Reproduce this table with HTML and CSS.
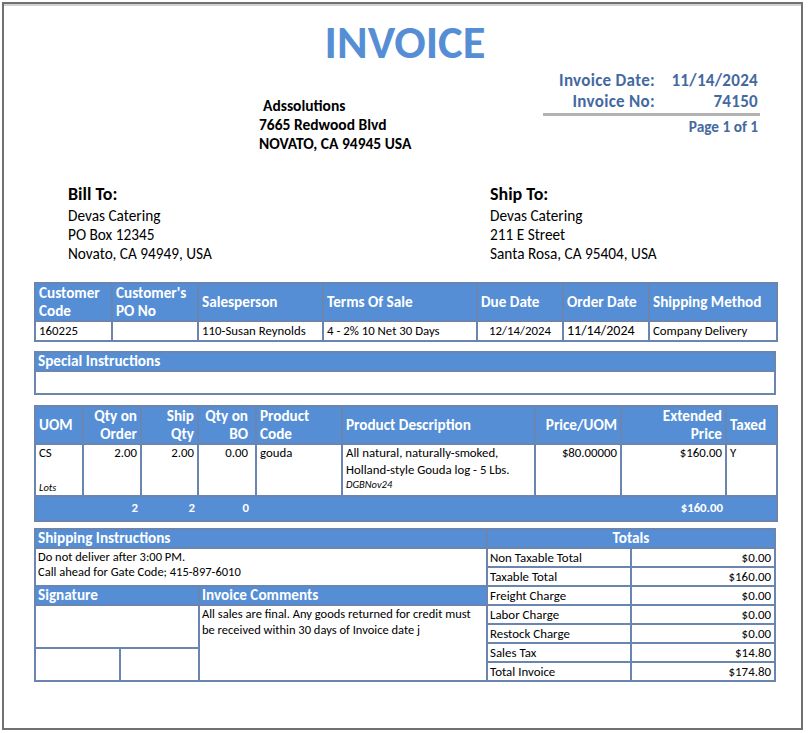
FILE: index.html
```html
<!DOCTYPE html>
<html lang="en">
<head>
<meta charset="utf-8">
<title>Invoice 74150</title>
<link rel="stylesheet" href="styles.css">
</head>
<body>
<div class="page">
  <h1 class="title">INVOICE</h1>
  <div class="head-row">
    <div class="company">
      <div class="co-name">Adssolutions</div>
      <div>7665 Redwood Blvd</div>
      <div>NOVATO, CA 94945 USA</div>
    </div>
    <div class="meta">
      <div class="meta-grid">
        <span class="ml">Invoice Date:</span><span class="mv">11/14/2024</span>
        <span class="ml">Invoice No:</span><span class="mv">74150</span>
      </div>
      <div class="rule"></div>
      <div class="pageno">Page 1 of 1</div>
    </div>
  </div>

  <div class="addr">
    <div class="addr-col">
      <div class="addr-h">Bill To:</div>
      <div>Devas Catering</div>
      <div>PO Box 12345</div>
      <div>Novato, CA 94949, USA</div>
    </div>
    <div class="addr-col">
      <div class="addr-h">Ship To:</div>
      <div>Devas Catering</div>
      <div>211 E Street</div>
      <div>Santa Rosa, CA 95404, USA</div>
    </div>
  </div>

  <table class="grid info">
    <colgroup>
      <col class="w77"><col class="w86"><col class="w125"><col class="w154"><col class="w86"><col class="w86"><col class="w128">
    </colgroup>
    <thead>
      <tr>
        <th>Customer Code</th>
        <th>Customer's PO No</th>
        <th>Salesperson</th>
        <th>Terms Of Sale</th>
        <th>Due Date</th>
        <th>Order Date</th>
        <th>Shipping Method</th>
      </tr>
    </thead>
    <tbody>
      <tr>
        <td>160225</td>
        <td></td>
        <td>110-Susan Reynolds</td>
        <td>4 - 2% 10 Net 30 Days</td>
        <td class="c">12/14/2024</td>
        <td class="big">11/14/2024</td>
        <td>Company Delivery</td>
      </tr>
    </tbody>
  </table>

  <div class="special">
    <div class="sec-head">Special Instructions</div>
    <div class="special-body"></div>
  </div>

  <table class="grid items">
    <colgroup>
      <col class="w48"><col class="w58"><col class="w57"><col class="w58"><col class="w86"><col class="w193"><col class="w86"><col class="w105"><col class="w51">
    </colgroup>
    <thead>
      <tr>
        <th>UOM</th>
        <th class="r">Qty on Order</th>
        <th class="r">Ship Qty</th>
        <th class="r bo">Qty on BO</th>
        <th>Product Code</th>
        <th>Product Description</th>
        <th class="r">Price/UOM</th>
        <th class="r">Extended<br>Price</th>
        <th>Taxed</th>
      </tr>
    </thead>
    <tbody>
      <tr class="item">
        <td><div>CS</div><div class="lot lot-gap">Lots</div></td>
        <td class="r">2.00</td>
        <td class="r">2.00</td>
        <td class="r bo">0.00</td>
        <td>gouda</td>
        <td><div>All natural, naturally-smoked,</div><div>Holland-style Gouda log - 5 Lbs.</div><div class="lot">DGBNov24</div></td>
        <td class="r">$80.00000</td>
        <td class="r">$160.00</td>
        <td>Y</td>
      </tr>
    </tbody>
    <tfoot>
      <tr>
        <td></td>
        <td class="r">2</td>
        <td class="r">2</td>
        <td class="r bo">0</td>
        <td></td>
        <td></td>
        <td></td>
        <td class="r">$160.00</td>
        <td></td>
      </tr>
    </tfoot>
  </table>

  <div class="bottom">
    <div class="left">
      <div class="sec-head">Shipping Instructions</div>
      <div class="ship-body">
        <div>Do not deliver after 3:00 PM.</div>
        <div>Call ahead for Gate Code; 415-897-6010</div>
      </div>
      <div class="lower">
        <div class="sig">
          <div class="sec-head">Signature</div>
          <div class="sig-box"></div>
          <div class="sig-split">
            <div class="sig-cell"></div>
            <div class="sig-cell"></div>
          </div>
        </div>
        <div class="comments">
          <div class="sec-head">Invoice Comments</div>
          <div class="comments-body">All sales are final. Any goods returned for credit must be received within 30 days of Invoice date j</div>
        </div>
      </div>
    </div>
    <div class="totals">
      <div class="sec-head center">Totals</div>
      <div class="trow"><span class="tl">Non Taxable Total</span><span class="tv">$0.00</span></div>
      <div class="trow"><span class="tl">Taxable Total</span><span class="tv">$160.00</span></div>
      <div class="trow"><span class="tl">Freight Charge</span><span class="tv">$0.00</span></div>
      <div class="trow"><span class="tl">Labor Charge</span><span class="tv">$0.00</span></div>
      <div class="trow"><span class="tl">Restock Charge</span><span class="tv">$0.00</span></div>
      <div class="trow"><span class="tl">Sales Tax</span><span class="tv">$14.80</span></div>
      <div class="trow last"><span class="tl">Total Invoice</span><span class="tv">$174.80</span></div>
    </div>
  </div>
</div>
</body>
</html>
```

FILE: styles.css
```css
* { box-sizing: border-box; }

body {
  margin: 0;
  background: #ffffff;
  color: #000000;
  font-family: Carlito, Lato, "Liberation Sans", sans-serif;
}

.page {
  margin: 2px;
  width: 801px;
  height: 728px;
  border: 2px solid #707070;
  box-shadow: inset 0 2px 0 #d2d2d2;
  padding: 13px 25px 0 30px;
}

.title {
  margin: 0;
  font-size: 46.5px;
  line-height: 50px;
  font-weight: 700;
  text-align: center;
  color: #558ed5;
}

.head-row {
  display: flex;
  align-items: flex-start;
}

.company {
  margin-left: 225px;
  margin-top: 29px;
  font-weight: 700;
  font-size: 15.5px;
  line-height: 19px;
}

.co-name { padding-left: 4px; }

.meta {
  margin-left: auto;
  margin-right: 16px;
  margin-top: 4px;
  width: 217px;
  color: #44699f;
  font-weight: 700;
}

.meta-grid {
  display: grid;
  grid-template-columns: 112px 1fr;
  font-size: 17px;
  letter-spacing: 0.3px;
  line-height: 20.5px;
  padding-right: 2px;
}

.ml, .mv { text-align: right; }

.rule {
  height: 3px;
  margin-top: 1px;
  background: #b3b3b3;
}

.pageno {
  margin-top: 2px;
  font-size: 15.3px;
  line-height: 17px;
  text-align: right;
  padding-right: 2px;
}

.addr {
  display: flex;
  margin-top: 30px;
  padding-left: 34px;
  font-size: 15.3px;
  line-height: 19px;
}

.addr-col:first-child { width: 422px; }

.addr-h {
  font-size: 18px;
  font-weight: 700;
  line-height: 22px;
  margin-bottom: 1px;
}

/* tables */
.grid {
  width: 742px;
  border-collapse: collapse;
  table-layout: fixed;
}

.grid th {
  background: #558ed5;
  color: #ffffff;
  font-weight: 700;
  font-size: 15.2px;
  line-height: 18px;
  padding: 0 3px 0 3px;
  text-align: left;
  vertical-align: middle;
  border: 2px solid #6a86b0;
}

.grid td {
  font-size: 12.8px;
  line-height: 16px;
  padding: 1px 3px;
  border: 2px solid #6a86b0;
  vertical-align: top;
}

.grid .r { text-align: right; }
.grid .c { text-align: center; }
.grid .big { font-size: 14px; }
.grid .bo { padding-right: 7px; }

.w48 { width: 48px; }
.w51 { width: 51px; }
.w57 { width: 57px; }
.w58 { width: 58px; }
.w77 { width: 77px; }
.w86 { width: 86px; }
.w105 { width: 105px; }
.w125 { width: 125px; }
.w128 { width: 128px; }
.w154 { width: 154px; }
.w193 { width: 193px; }

.info { margin-top: 19px; }
.info th { height: 38px; }
.info td { height: 20px; }

.special {
  margin-top: 9px;
  width: 742px;
  border: 2px solid #6a86b0;
}

.sec-head {
  background: #558ed5;
  color: #ffffff;
  font-weight: 700;
  font-size: 15.2px;
  line-height: 17px;
  padding: 0 2px;
  border-bottom: 2px solid #6a86b0;
}

.sec-head.center { text-align: center; }

.special-body { height: 21px; }

.items { margin-top: 10px; }
.items th { height: 37px; line-height: 18px; }
.items .item td { height: 50px; line-height: 16.5px; padding-top: 0; }
.items .lot {
  font-style: italic;
  font-size: 10.5px;
  line-height: 13px;
}
.items .lot-gap { margin-top: 19px; }

.items tfoot td {
  background: #558ed5;
  color: #ffffff;
  font-weight: 700;
  height: 25px;
  vertical-align: middle;
  border-left: none;
  border-right: none;
}
.items tfoot td:first-child { border-left: 2px solid #6a86b0; }
.items tfoot td:last-child { border-right: 2px solid #6a86b0; }

/* bottom section */
.bottom {
  margin-top: 6px;
  width: 742px;
  display: flex;
  border: 2px solid #6a86b0;
  font-size: 12.5px;
}

.left {
  width: 452px;
  border-right: 2px solid #6a86b0;
  display: flex;
  flex-direction: column;
}

.ship-body {
  height: 38px;
  padding: 0 2px;
  line-height: 15px;
  border-bottom: 2px solid #6a86b0;
}

.lower {
  display: flex;
  flex: 1;
}

.sig {
  width: 164px;
  border-right: 2px solid #6a86b0;
  display: flex;
  flex-direction: column;
}

.sig-box {
  height: 43px;
  border-bottom: 2px solid #6a86b0;
}

.sig-split {
  display: flex;
  flex: 1;
}

.sig-cell { flex: 0 0 85px; border-right: 2px solid #6a86b0; }
.sig-cell:last-child { flex: 1; border-right: none; }

.comments { flex: 1; }

.comments-body {
  padding: 0 2px;
  line-height: 16px;
}

.totals {
  flex: 1;
  display: flex;
  flex-direction: column;
}

.trow {
  display: flex;
  height: 19px;
  line-height: 17px;
  font-size: 12.9px;
  border-bottom: 2px solid #6a86b0;
}
.trow.last { border-bottom: none; height: 17px; }

.tl {
  width: 144px;
  padding-left: 2px;
  border-right: 2px solid #6a86b0;
}

.tv {
  flex: 1;
  text-align: right;
  padding-right: 3px;
}
```
